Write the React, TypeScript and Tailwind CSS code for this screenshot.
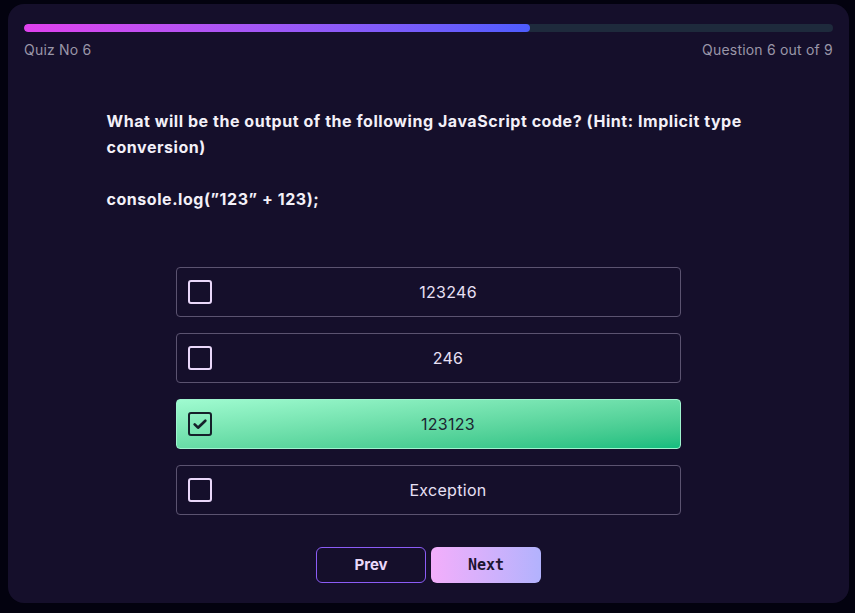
import { useState } from 'react';

const options = ['123246', '246', '123123', 'Exception'];

export default function App() {
    const [selected, setSelected] = useState(2);
    const current = 6;
    const total = 9;

    return (
        <div className="w-[855px] h-[613px] bg-[#03020f] pl-2 pr-[6px] pt-1 pb-[10px] font-['Inter',sans-serif]">
            <div className="h-full bg-[#150f2b] rounded-2xl px-4 pt-5 flex flex-col">
                {/* progress */}
                <div className="h-2 rounded-full bg-[#1e2a3c] overflow-hidden">
                    <div
                        className="h-full rounded-full bg-gradient-to-r from-[#e040ee] to-[#4d5cff]"
                        style={{ width: `${(5 / 8) * 100}%` }}
                    ></div>
                </div>
                <div className="flex justify-between mt-[9px] text-[14px] leading-[18px] text-[#9a96a8] tracking-[0.2px]">
                    <span>Quiz No {current}</span>
                    <span>Question {current} out of {total}</span>
                </div>

                <div className="w-[644px] mx-auto mt-[49px] text-[16px] leading-[26px] font-bold tracking-[0.55px] text-[#f3f0f8] whitespace-pre-line">
                    {'What will be the output of the following JavaScript code? (Hint: Implicit type conversion)\n\nconsole.log(”123” + 123);'}
                </div>

                <div className="w-[505px] mx-auto mt-[55px] flex flex-col gap-4">
                    {options.map((opt, i) => {
                        const active = i === selected;
                        return (
                            <button
                                key={opt}
                                onClick={() => setSelected(i)}
                                className={
                                    active
                                        ? 'h-[50px] rounded-[4px] border border-[#9ff5cf] bg-gradient-to-br from-[#9ffbd0] to-[#10bd7e] flex items-center pl-[11px] text-[#1b2530]'
                                        : 'h-[50px] rounded-[4px] border border-[#5b5370] flex items-center pl-[11px] text-[#e8e0f5]'
                                }
                            >
                                <span
                                    className={
                                        active
                                            ? 'w-6 h-6 rounded-[3px] border-2 border-[#15202a] flex items-center justify-center'
                                            : 'w-6 h-6 rounded-[3px] border-2 border-[#ead8fa]'
                                    }
                                >
                                    {active && (
                                        <svg width="16" height="16" viewBox="0 0 24 24" fill="none" stroke="#15202a" strokeWidth="4" strokeLinecap="round" strokeLinejoin="round">
                                            <path d="M4 12.5l5 5L20 7" />
                                        </svg>
                                    )}
                                </span>
                                <span className="flex-1 text-center text-[16px] ml-1 tracking-[0.3px]">{opt}</span>
                            </button>
                        );
                    })}
                </div>

                <div className="flex justify-center gap-[5px] mt-8">
                    <button className="w-[110px] h-[36px] rounded-md border border-[#8b5cf6] text-[#ead8fa] font-bold text-[15px]">
                        Prev
                    </button>
                    <button className="w-[110px] h-[36px] rounded-md bg-gradient-to-r from-[#f3aefb] to-[#b2b2fd] text-[#1c1530] font-bold text-[15px] font-['DejaVu_Sans_Mono',monospace]">
                        Next
                    </button>
                </div>
            </div>
        </div>
    );
}
